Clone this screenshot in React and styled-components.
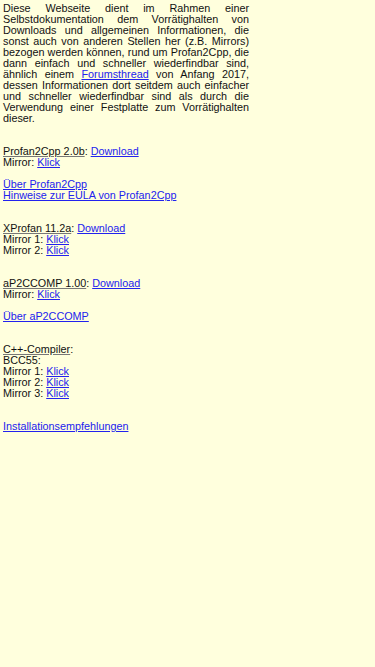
import React from "react";
import styled, { createGlobalStyle } from "styled-components";

const Global = createGlobalStyle`
  html, body { margin: 0; padding: 0; background: #ffffdd; }
  body { min-height: 667px; }
`;

const Page = styled.div`
  padding: 3px;
  width: 246px;
  font-family: "Liberation Sans", Arial, sans-serif;
  font-size: 10.8px;
  line-height: 11px;
  color: #111;
`;

const Intro = styled.p`
  margin: 0;
  text-align: justify;
`;

const Block = styled.div`
  margin-top: ${(p) => p.$gap}px;
`;

const Label = styled.span`
  text-decoration: underline;
  text-decoration-color: #777;
`;

const Link = styled.a`
  color: #2222ee;
  text-decoration: underline;
`;

export default function App() {
  return (
    <>
      <Global />
      <Page>
        <Intro>
          Diese Webseite dient im Rahmen einer Selbstdokumentation dem
          Vorrätighalten von Downloads und allgemeinen Informationen, die sonst
          auch von anderen Stellen her (z.B. Mirrors) bezogen werden können,
          rund um Profan2Cpp, die dann einfach und schneller wiederfindbar sind,
          ähnlich einem <Link href="#">Forumsthread</Link> von Anfang 2017,
          dessen Informationen dort seitdem auch einfacher und schneller
          wiederfindbar sind als durch die Verwendung einer Festplatte zum
          Vorrätighalten dieser.
        </Intro>
        <Block $gap={22}>
          <Label>Profan2Cpp 2.0b</Label>: <Link href="#">Download</Link>
          <br />
          Mirror: <Link href="#">Klick</Link>
        </Block>
        <Block $gap={11}>
          <Link href="#">Über Profan2Cpp</Link>
          <br />
          <Link href="#">Hinweise zur EULA von Profan2Cpp</Link>
        </Block>
        <Block $gap={22}>
          <Label>XProfan 11.2a</Label>: <Link href="#">Download</Link>
          <br />
          Mirror 1: <Link href="#">Klick</Link>
          <br />
          Mirror 2: <Link href="#">Klick</Link>
        </Block>
        <Block $gap={22}>
          <Label>aP2CCOMP 1.00</Label>: <Link href="#">Download</Link>
          <br />
          Mirror: <Link href="#">Klick</Link>
        </Block>
        <Block $gap={11}>
          <Link href="#">Über aP2CCOMP</Link>
        </Block>
        <Block $gap={22}>
          <Label>C++-Compiler</Label>:
          <br />
          BCC55:
          <br />
          Mirror 1: <Link href="#">Klick</Link>
          <br />
          Mirror 2: <Link href="#">Klick</Link>
          <br />
          Mirror 3: <Link href="#">Klick</Link>
        </Block>
        <Block $gap={22}>
          <Link href="#">Installationsempfehlungen</Link>
        </Block>
      </Page>
    </>
  );
}
